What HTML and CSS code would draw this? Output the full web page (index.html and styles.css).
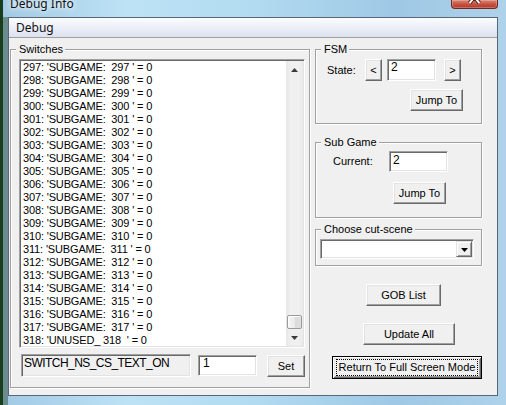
FILE: index.html
```html
<!DOCTYPE html>
<html>
<head>
<meta charset="utf-8">
<link rel="stylesheet" href="styles.css">
</head>
<body>
<div class="frame">
  <div class="titlebar">
    <span class="title">Debug Info</span>
    <div class="close">
      <svg width="47" height="8" viewBox="0 0 47 8"><path d="M24 -3 L19 3 M24 -3 L29 3" stroke="#5a1a12" stroke-width="4" fill="none"/><path d="M24 -3 L19 3 M24 -3 L29 3" stroke="#fff" stroke-width="2" fill="none"/></svg>
    </div>
  </div>
  <div class="client">
    <div class="header">Debug</div>
    <div class="panel">
      <div class="group switches">
        <div class="glabel">Switches</div>
        <div class="listbox">
          <div class="items">
            <div class="item">297: 'SUBGAME:  297 ' = 0</div>
            <div class="item">298: 'SUBGAME:  298 ' = 0</div>
            <div class="item">299: 'SUBGAME:  299 ' = 0</div>
            <div class="item">300: 'SUBGAME:  300 ' = 0</div>
            <div class="item">301: 'SUBGAME:  301 ' = 0</div>
            <div class="item">302: 'SUBGAME:  302 ' = 0</div>
            <div class="item">303: 'SUBGAME:  303 ' = 0</div>
            <div class="item">304: 'SUBGAME:  304 ' = 0</div>
            <div class="item">305: 'SUBGAME:  305 ' = 0</div>
            <div class="item">306: 'SUBGAME:  306 ' = 0</div>
            <div class="item">307: 'SUBGAME:  307 ' = 0</div>
            <div class="item">308: 'SUBGAME:  308 ' = 0</div>
            <div class="item">309: 'SUBGAME:  309 ' = 0</div>
            <div class="item">310: 'SUBGAME:  310 ' = 0</div>
            <div class="item">311: 'SUBGAME:  311 ' = 0</div>
            <div class="item">312: 'SUBGAME:  312 ' = 0</div>
            <div class="item">313: 'SUBGAME:  313 ' = 0</div>
            <div class="item">314: 'SUBGAME:  314 ' = 0</div>
            <div class="item">315: 'SUBGAME:  315 ' = 0</div>
            <div class="item">316: 'SUBGAME:  316 ' = 0</div>
            <div class="item">317: 'SUBGAME:  317 ' = 0</div>
            <div class="item">318: 'UNUSED_ 318  ' = 0</div>
          </div>
          <div class="vscroll">
            <div class="sbbtn"><svg width="7" height="4" viewBox="0 0 7 4"><path d="M0 4 L3.5 0 L7 4Z" fill="#3c3c3c"/></svg></div>
            <div class="track"><div class="thumb"></div></div>
            <div class="sbbtn"><svg width="7" height="4" viewBox="0 0 7 4"><path d="M0 0 L3.5 4 L7 0Z" fill="#3c3c3c"/></svg></div>
          </div>
        </div>
        <div class="bottomrow">
          <div class="edit readonly">SWITCH_NS_CS_TEXT_ON</div>
          <div class="edit value">1</div>
          <div class="btn setbtn">Set</div>
        </div>
      </div>
      <div class="rightcol">
        <div class="group fsm">
          <div class="glabel">FSM</div>
          <div class="row">
            <span class="lbl state-lbl">State:</span>
            <div class="btn arrowbtn">&lt;</div>
            <div class="edit fsm-edit">2</div>
            <div class="btn arrowbtn next">&gt;</div>
          </div>
          <div class="btn jump fsm-jump">Jump To</div>
        </div>
        <div class="group subgame">
          <div class="glabel">Sub Game</div>
          <div class="row">
            <span class="lbl cur-lbl">Current:</span>
            <div class="edit sub-edit">2</div>
          </div>
          <div class="btn jump sub-jump">Jump To</div>
        </div>
        <div class="group cutscene">
          <div class="glabel">Choose cut-scene</div>
          <div class="combo">
            <div class="dropbtn"><svg width="7" height="4" viewBox="0 0 7 4"><path d="M0 0 L3.5 4 L7 0Z" fill="#000"/></svg></div>
          </div>
        </div>
        <div class="btn gob">GOB List</div>
        <div class="btn update">Update All</div>
        <div class="btn defbtn">Return To Full Screen Mode</div>
      </div>
    </div>
  </div>
</div>
</body>
</html>
```
FILE: styles.css
```css
* { box-sizing: border-box; }
html, body { margin: 0; padding: 0; }
body {
  width: 506px;
  height: 405px;
  overflow: hidden;
  font-family: "Liberation Sans", Arial, sans-serif;
  font-size: 11px;
  color: #000;
  background:
    linear-gradient(90deg, #183d1c 0 3px, transparent 3px),
    linear-gradient(180deg, transparent 17px, #6a8c8c 17px) 0 0 / 8px 100% no-repeat,
    linear-gradient(90deg, #a1c9e4, #bde2f5 25%, #b2dbf1 50%, #9ec8e5 78%, #aed2ea);
}
.frame {
  display: flex;
  flex-direction: column;
  height: 405px;
  padding: 0 8px 9px 8px;
}
.titlebar {
  height: 17px;
  margin: 0 -8px;
  padding: 0 8px 0 10px;
  display: flex;
  justify-content: space-between;
  align-items: flex-start;
}
.title {
  font-family: "Noto Sans", sans-serif;
  font-size: 12px;
  line-height: 16px;
  margin-top: -4px;
  color: #111;
  text-shadow: 0 0 4px #fff, 0 0 8px #fff;
}
.close {
  width: 47px;
  height: 9px;
  border: 1px solid #6e2a20;
  border-top: none;
  border-radius: 0 0 4px 4px;
  background: linear-gradient(#d98a7a, #c4503f 55%, #b23a2b);
  box-shadow: inset 0 0 0 1px rgba(255, 200, 190, 0.35);
  display: flex;
  justify-content: center;
  margin-left: -1px;
}
.close svg { display: block; margin-left: -1px; }
.client {
  flex: 1;
  border: 1px solid #5a6678;
  background: #f0f0f0;
  display: flex;
  flex-direction: column;
}
.header {
  height: 20px;
  border-bottom: 1px solid #a0a0a0;
  background: linear-gradient(#fbfcfe, #dce1f0);
  padding-left: 7px;
  font-family: "Noto Sans", sans-serif;
  font-size: 12px;
  line-height: 19px;
  color: #111;
}
.panel {
  flex: 1;
  display: flex;
  align-items: flex-start;
  gap: 5px;
  padding: 11px 0 0 1px;
}
.group {
  --pl: 0px;
  border: 1px solid #a0a0a0;
  box-shadow: inset 1px 1px 0 #fff, 1px 1px 0 #fff;
  padding-left: var(--pl);
}
.glabel {
  display: table;
  margin: -7px 0 0 calc(5px - var(--pl));
  padding: 0 2px 0 3px;
  line-height: 13px;
  background: #f0f0f0;
}
.switches {
  --pl: 8px;
  width: 300px;
  padding-right: 4px;
  padding-bottom: 10px;
}
.listbox {
  margin-top: 3px;
  height: 289px;
  display: flex;
  background: #fff;
  border: 1px solid;
  border-color: #a0a0a0 #fff #fff #a0a0a0;
  box-shadow: inset 1px 1px 0 #696969, inset -1px -1px 0 #e3e3e3;
  padding: 1px;
}
.items {
  flex: 1;
  overflow: hidden;
  padding-left: 2px;
}
.item {
  height: 13px;
  line-height: 13px;
  white-space: pre;
  letter-spacing: -0.15px;
}
.vscroll {
  width: 17px;
  display: flex;
  flex-direction: column;
  background: linear-gradient(90deg, #e6e6e6, #f0f0f0 25%, #f0f0f0 75%, #eaeaea);
}
.sbbtn {
  height: 17px;
  display: flex;
  align-items: center;
  justify-content: center;
}
.sbbtn svg { display: block; }
.track {
  flex: 1;
  display: flex;
  flex-direction: column;
  justify-content: flex-end;
}
.thumb {
  height: 14px;
  margin: 0 1px;
  border: 1px solid #9a9a9a;
  border-radius: 2px;
  background: linear-gradient(90deg, #f6f6f6, #e9e9e9 50%, #dadada 51%, #e0e0e0);
  box-shadow: inset 1px 1px 0 #fff;
}
.bottomrow {
  display: flex;
  align-items: flex-start;
  margin: 6px 0 0 2px;
}
.edit {
  background: #fff;
  border: 1px solid;
  border-color: #a0a0a0 #fff #fff #a0a0a0;
  box-shadow: inset 1px 1px 0 #696969, inset -1px -1px 0 #e3e3e3;
  font-size: 12px;
  line-height: 13px;
  white-space: pre;
}
.readonly {
  width: 170px;
  height: 23px;
  background: #f0f0f0;
  padding: 2px 0 0 2px;
  letter-spacing: -0.55px;
}
.value {
  width: 59px;
  height: 21px;
  margin: 1px 0 0 7px;
  padding: 1px 0 0 4px;
}
.btn {
  display: flex;
  align-items: center;
  justify-content: center;
  background: #f0f0f0;
  border: 1px solid;
  border-color: #fff #696969 #696969 #fff;
  box-shadow: inset -1px -1px 0 #a0a0a0, inset 1px 1px 0 #e3e3e3;
  line-height: 13px;
  white-space: nowrap;
}
.setbtn {
  width: 38px;
  height: 22px;
  margin: 1px 0 0 10px;
}
.rightcol {
  width: 167px;
  display: flex;
  flex-direction: column;
  align-items: flex-start;
}
.rightcol .group { width: 167px; }
.row {
  display: flex;
  align-items: center;
}
.lbl { line-height: 13px; }
.fsm { --pl: 11px; padding-bottom: 12px; }
.fsm .row { margin-top: 3px; height: 22px; }
.state-lbl { width: 38px; }
.arrowbtn {
  width: 17px;
  height: 22px;
  font-size: 11px;
}
.fsm-edit {
  width: 49px;
  height: 22px;
  margin-left: 5px;
  padding: 1px 0 0 3px;
}
.arrowbtn.next { margin-left: 8px; }
.jump { width: 53px; height: 22px; }
.fsm-jump { margin: 8px 0 0 83px; }
.subgame {
  --pl: 17px;
  margin-top: 18px;
  padding-bottom: 13px;
}
.subgame .row { margin-top: 2px; height: 21px; }
.cur-lbl { width: 56px; }
.sub-edit {
  width: 59px;
  height: 21px;
  padding: 2px 0 0 3px;
}
.sub-jump { margin: 10px 0 0 60px; }
.cutscene {
  --pl: 4px;
  margin-top: 11px;
  padding-bottom: 6px;
}
.combo {
  margin-top: 3px;
  width: 154px;
  height: 20px;
  background: #fff;
  border: 1px solid;
  border-color: #a0a0a0 #fff #fff #a0a0a0;
  box-shadow: inset 1px 1px 0 #696969, inset -1px -1px 0 #e3e3e3;
  padding: 1px;
  display: flex;
  justify-content: flex-end;
}
.dropbtn {
  width: 16px;
  height: 16px;
  background: #f0f0f0;
  border: 1px solid;
  border-color: #e3e3e3 #696969 #696969 #e3e3e3;
  box-shadow: inset 1px 1px 0 #fff, inset -1px -1px 0 #a0a0a0;
  display: flex;
  align-items: center;
  justify-content: center;
  padding-top: 1px;
}
.dropbtn svg { display: block; }
.gob {
  width: 75px;
  height: 22px;
  margin: 18px 0 0 51px;
}
.update {
  width: 92px;
  height: 22px;
  margin: 17px 0 0 48px;
}
.defbtn {
  position: relative;
  width: 150px;
  height: 23px;
  margin: 11px 0 0 17px;
  border: 1px solid #000;
  box-shadow: inset 1px 1px 0 #fff, inset -1px -1px 0 #696969, inset 2px 2px 0 #e3e3e3, inset -2px -2px 0 #a0a0a0;
}
.defbtn::after {
  content: "";
  position: absolute;
  top: 2px;
  bottom: 2px;
  left: 3px;
  right: 3px;
  border: 1px dotted #000;
}
```
